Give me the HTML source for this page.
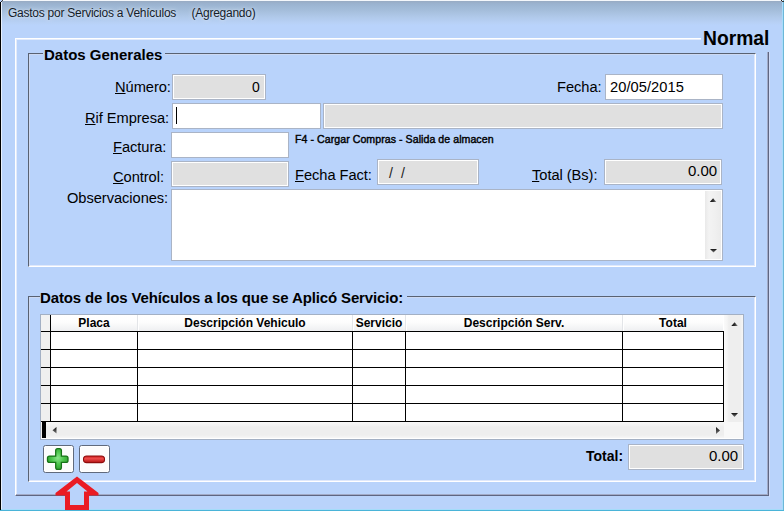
<!DOCTYPE html>
<html><head><meta charset="utf-8">
<style>
*{margin:0;padding:0;box-sizing:border-box}
html,body{width:784px;height:511px;overflow:hidden;background:#b9d3fb;font-family:"Liberation Sans",sans-serif;color:#000}
.a{position:absolute}
#win{position:absolute;left:0;top:0;width:784px;height:511px;background:#b9d3fb;overflow:hidden}
#titlebar{left:2px;top:1px;width:780px;height:24px;background:linear-gradient(#98abc3 0px,#9bb3d0 3px,#a4bdda 9px,#b0c9ea 16px,#b8d1f6 22px,#b9d3fb 24px)}
#title{left:8px;top:6px;font-size:12px;color:#141c2a;white-space:pre;letter-spacing:-0.25px;text-shadow:0 0 5px rgba(235,243,255,.8),0 0 2px rgba(235,243,255,.6)}
.lbl{position:absolute;font-size:14.67px;white-space:pre;color:#000;line-height:16px;letter-spacing:-0.05px}
.u{text-decoration:underline;text-underline-offset:1px;text-decoration-thickness:1px}
.fld{position:absolute;border:1px solid #aab4c6;background:#fff;box-shadow:inset 0 0 0 1px #fff}
.g{background:#e0e0e0}
.val{position:absolute;font-size:14px;line-height:16px;white-space:pre}
.hdr{position:absolute;font-size:12px;font-weight:bold;line-height:14px;white-space:pre;text-align:center}
</style></head><body>
<div id="win">
  <div class="a" style="left:0;top:0;width:1px;height:511px;background:#000"></div>
  <div class="a" style="left:1px;top:0;width:1px;height:511px;background:#e8f0fc"></div>
  <div class="a" style="left:783px;top:0;width:1px;height:511px;background:#6cb6d8"></div>
  <div class="a" style="left:782px;top:0;width:1px;height:511px;background:#a8dcfa"></div>
  <div class="a" style="left:1px;top:509px;width:782px;height:1px;background:#a4dcfa"></div>
  <div class="a" style="left:0;top:510px;width:784px;height:1px;background:#4ab4d8"></div>
  <div class="a" id="titlebar"></div>
  <div class="a" style="left:1px;top:0;width:782px;height:1px;background:#f4f7fb"></div>
  <div class="a" style="left:0;top:0;width:2px;height:2px;background:#b9d3fb"></div>
  <div class="a" style="left:1px;top:1px;width:1px;height:1px;background:#333"></div>
  <div class="a" style="left:2px;top:0;width:1px;height:1px;background:#444"></div>
  <div class="a" style="left:781px;top:0;width:1px;height:1px;background:#222"></div>
  <div class="a" style="left:782px;top:1px;width:2px;height:1px;background:#333"></div>
  <div class="a" id="title">Gastos por Servicios a Vehículos     (Agregando)</div>

  <!-- inner raised panel -->
  <div class="a" style="left:15px;top:38px;width:754px;height:458px;border-top:1px solid #fff;border-left:1px solid #fff;border-right:1px solid #5e6682;border-bottom:1px solid #5e6682;box-shadow:inset 1px 1px 0 #e2ebfc"></div>
  <div class="a" style="left:16px;top:494px;width:752px;height:1px;background:#a2aac6"></div>
  <div class="a" style="left:767px;top:39px;width:1px;height:456px;background:#a2aac6"></div>
  <div class="a" style="left:769px;top:39px;width:1px;height:458px;background:#cfdbf8"></div>
  <!-- Normal label -->
  <div class="a" style="left:701px;top:26px;width:76px;height:26px;background:#b9d3fb"></div>
  <div class="a" style="left:703px;top:27.5px;font-size:19.3px;font-weight:bold;line-height:22px;color:#000;letter-spacing:0px">Normal</div>

  <!-- groupbox 1 -->
  <div class="a" style="left:28px;top:53px;width:728px;height:214px;border-top:1px solid #596272;border-left:1px solid #596272;border-right:1px solid #fff;border-bottom:1px solid #fff;box-shadow:inset 1px 1px 0 #cdd9f2,inset -1px -1px 0 #dfe8fb"></div>
  <div class="a" style="left:43px;top:47px;padding:0 3px 0 1px;background:#b9d3fb;font-size:15px;font-weight:bold;line-height:16px">Datos Generales</div>

  <div class="lbl" style="left:115px;top:79px"><span class="u">N</span>úmero:</div>
  <div class="fld g" style="left:172px;top:74px;width:94px;height:26px"></div>
  <div class="val" style="left:252px;top:79px">0</div>

  <div class="lbl" style="left:557px;top:79px">Fecha:</div>
  <div class="fld" style="left:605px;top:74px;width:118px;height:26px"></div>
  <div class="val" style="left:610px;top:79px;font-size:14.67px;letter-spacing:0.05px">20/05/2015</div>

  <div class="lbl" style="left:85px;top:110px"><span class="u">R</span>if Empresa:</div>
  <div class="fld" style="left:172px;top:103px;width:149px;height:26px"></div>
  <div class="a" style="left:176px;top:107px;width:1px;height:17px;background:#000"></div>
  <div class="fld g" style="left:323px;top:103px;width:400px;height:26px"></div>

  <div class="lbl" style="left:113px;top:139px"><span class="u">F</span>actura:</div>
  <div class="fld" style="left:171px;top:132px;width:118px;height:26px"></div>
  <div class="a" style="left:295px;top:133px;font-size:10.6px;line-height:13px;white-space:pre;letter-spacing:0.05px;-webkit-text-stroke:0.4px #000">F4 - Cargar Compras - Salida de almacen</div>

  <div class="lbl" style="left:113px;top:169px"><span class="u">C</span>ontrol:</div>
  <div class="fld g" style="left:171px;top:161px;width:118px;height:26px"></div>

  <div class="lbl" style="left:295px;top:167px"><span class="u">F</span>echa Fact:</div>
  <div class="fld g" style="left:377px;top:159px;width:102px;height:26px"></div>
  <div class="val" style="left:389px;top:165px;color:#222">/</div>
  <div class="val" style="left:401px;top:165px;color:#222">/</div>

  <div class="lbl" style="left:532px;top:167px"><span class="u">T</span>otal (Bs):</div>
  <div class="fld g" style="left:604px;top:159px;width:118px;height:26px"></div>
  <div class="val" style="left:688px;top:162px;font-size:15px;line-height:17px">0.00</div>

  <div class="lbl" style="left:67px;top:190px">Observaciones:</div>
  <div class="fld" style="left:171px;top:189px;width:552px;height:72px"></div>
  <div class="a" style="left:705px;top:191px;width:16px;height:68px;background:linear-gradient(90deg,#e9e9e9,#f3f3f3 25%,#f0f0f0 60%,#ebebeb)"></div>
  

  <!-- groupbox 2 -->
  <div class="a" style="left:28px;top:296px;width:728px;height:186px;border-top:1px solid #596272;border-left:1px solid #596272;border-right:1px solid #fff;border-bottom:1px solid #fff;box-shadow:inset 1px 1px 0 #cdd9f2,inset -1px -1px 0 #dfe8fb"></div>
  <div class="a" style="left:40px;top:290px;padding:0 4px 0 0;background:#b9d3fb;font-size:15px;font-weight:bold;line-height:16px;letter-spacing:-0.14px">Datos de los Vehículos a los que se Aplicó Servicio:</div>

  <!-- grid -->
  <div class="a" style="left:40px;top:314px;width:704px;height:126px;background:#fff;border:1px solid #a3b0c4"></div>
  <div class="a" style="left:41px;top:315px;width:682px;height:16px;background:linear-gradient(#ffffff,#fdfdfd 45%,#eeeff1)"></div>
  <div class="a" style="left:41px;top:315px;width:9px;height:16px;background:#f2f2f2"></div>
  <div class="a" style="left:51px;top:332px;width:672px;height:89px;background:#fff"></div>
  <div class="a" style="left:41px;top:332px;width:9px;height:89px;background:#efefef"></div>
  <div class="a" style="left:137px;top:315px;width:1px;height:16px;background:#e3e5e8"></div>
  <div class="a" style="left:138px;top:315px;width:1px;height:16px;background:#ffffff"></div>
  <div class="a" style="left:352px;top:315px;width:1px;height:16px;background:#e3e5e8"></div>
  <div class="a" style="left:353px;top:315px;width:1px;height:16px;background:#ffffff"></div>
  <div class="a" style="left:405px;top:315px;width:1px;height:16px;background:#e3e5e8"></div>
  <div class="a" style="left:406px;top:315px;width:1px;height:16px;background:#ffffff"></div>
  <div class="a" style="left:622px;top:315px;width:1px;height:16px;background:#e3e5e8"></div>
  <div class="a" style="left:623px;top:315px;width:1px;height:16px;background:#ffffff"></div>
  <div class="a" style="left:41px;top:331px;width:684px;height:1px;background:#000"></div>
  <div class="a" style="left:41px;top:349px;width:684px;height:1px;background:#000"></div>
  <div class="a" style="left:41px;top:367px;width:684px;height:1px;background:#000"></div>
  <div class="a" style="left:41px;top:385px;width:684px;height:1px;background:#000"></div>
  <div class="a" style="left:41px;top:403px;width:684px;height:1px;background:#000"></div>
  <div class="a" style="left:41px;top:421px;width:684px;height:1px;background:#000"></div>
  <div class="a" style="left:50px;top:315px;width:1px;height:107px;background:#000"></div>
  <div class="a" style="left:137px;top:331px;width:1px;height:91px;background:#000"></div>
  <div class="a" style="left:352px;top:331px;width:1px;height:91px;background:#000"></div>
  <div class="a" style="left:405px;top:331px;width:1px;height:91px;background:#000"></div>
  <div class="a" style="left:622px;top:331px;width:1px;height:91px;background:#000"></div>
  <div class="a" style="left:723px;top:331px;width:1px;height:91px;background:#000"></div>
  <div class="hdr" style="left:51px;top:316px;width:86px">Placa</div>
  <div class="hdr" style="left:138px;top:316px;width:214px">Descripción Vehiculo</div>
  <div class="hdr" style="left:353px;top:316px;width:52px">Servicio</div>
  <div class="hdr" style="left:406px;top:316px;width:216px">Descripción Serv.</div>
  <div class="hdr" style="left:623px;top:316px;width:100px">Total</div>
  <div class="a" style="left:724px;top:315px;width:19px;height:107px;background:linear-gradient(90deg,#fafafa 0,#f5f5f5 3px,#eeeeee 5px,#eeeeee 16px,#f6f6f6 19px)"></div>
  
  
  <div class="a" style="left:41px;top:422px;width:683px;height:16px;background:linear-gradient(#f8f8f8 0,#f3f3f3 3px,#eeeeee 5px,#eeeeee 13px,#f6f6f6 16px)"></div>
  <div class="a" style="left:42px;top:422px;width:4px;height:16px;background:#000"></div>
  
  
  <div class="a" style="left:724px;top:422px;width:19px;height:16px;background:#f8f8f8"></div>

  <svg class="a" style="left:0;top:0" width="784" height="511" viewBox="0 0 784 511">
    <defs><linearGradient id="ar" x1="0" y1="0" x2="1" y2="0"><stop offset="0" stop-color="#0a0a0a"/><stop offset="0.55" stop-color="#333"/><stop offset="1" stop-color="#8a8a8a"/></linearGradient>
    <linearGradient id="ad" x1="0" y1="0" x2="0" y2="1"><stop offset="0" stop-color="#111"/><stop offset="1" stop-color="#777"/></linearGradient></defs>
    <path d="M731.3,326 L734.6,322.3 L737.8,326 Z" fill="url(#ar)"/>
    <path d="M731,413 L738,413 L734.5,417 Z" fill="url(#ad)"/>
    <path d="M56.5,427 L52.5,430.2 L56.5,433.5 Z" fill="url(#ad)"/>
    <path d="M716,427 L720,430.5 L716,434 Z" fill="url(#ad)"/>
    <path d="M709.8,202 L713.1,198.3 L716.3,202 Z" fill="url(#ar)"/>
    <path d="M710,249 L717,249 L713.5,252.5 Z" fill="url(#ad)"/>
  </svg>
  <!-- buttons -->
  <div class="a" style="left:43px;top:445px;width:31px;height:28px;border:1px solid #606a7c;border-radius:2.5px;background:#fcfcfc;box-shadow:inset 0 0 0 1px #fff"></div>
  <div class="a" style="left:79px;top:445px;width:31px;height:28px;border:1px solid #606a7c;border-radius:2.5px;background:#fcfcfc;box-shadow:inset 0 0 0 1px #fff"></div>
  <svg class="a" style="left:0;top:0" width="784" height="511" viewBox="0 0 784 511">
    <defs>
      <linearGradient id="gv" x1="0" y1="0" x2="1" y2="0"><stop offset="0" stop-color="#1f8a1f"/><stop offset="0.5" stop-color="#6ad86a"/><stop offset="1" stop-color="#1f8a1f"/></linearGradient>
      <linearGradient id="gh" x1="0" y1="0" x2="0" y2="1"><stop offset="0" stop-color="#1f8a1f"/><stop offset="0.5" stop-color="#5fd25f"/><stop offset="1" stop-color="#1a7a1a"/></linearGradient>
      <radialGradient id="gr" cx="0.5" cy="0.45" r="0.6"><stop offset="0" stop-color="#8be58b"/><stop offset="0.5" stop-color="#4cc54c"/><stop offset="1" stop-color="#2a9a2a"/></radialGradient>
      <linearGradient id="rr" x1="0" y1="0" x2="0" y2="1"><stop offset="0" stop-color="#c81e1e"/><stop offset="0.4" stop-color="#ee4a4a"/><stop offset="1" stop-color="#b01212"/></linearGradient>
      <linearGradient id="rh" x1="0" y1="0" x2="0" y2="1"><stop offset="0" stop-color="#8a0c0c"/><stop offset="0.45" stop-color="#e84040"/><stop offset="1" stop-color="#9a1010"/></linearGradient>
    </defs>
    <path d="M55.7,450.5 Q55.7,448.6 57.6,448.6 L59.5,448.6 Q61.4,448.6 61.4,450.5 L61.4,456.1 L66,456.1 Q68,456.1 68,458.1 L68,460.4 Q68,462.4 66,462.4 L61.4,462.4 L61.4,467.4 Q61.4,469.3 59.5,469.3 L57.6,469.3 Q55.7,469.3 55.7,467.4 L55.7,462.4 L49.5,462.4 Q47.5,462.4 47.5,460.4 L47.5,458.1 Q47.5,456.1 49.5,456.1 L55.7,456.1 Z" fill="url(#gr)" stroke="#177317" stroke-width="1.3"/>
    <rect x="83.5" y="456" width="21" height="6.6" rx="3.2" fill="url(#rr)" stroke="#8e0c0c" stroke-width="1.1"/>
    <path fill="#b9d3fb" d="M77,483 L87.5,491.5 L84,491.5 L84,505 L70,505 L70,491.5 L66.5,491.5 Z"/>
    <path fill="#ea1c24" fill-rule="evenodd" d="M77,476.5 L98.5,493 L98.5,495.5 L89,495.5 L89,510 L65,510 L65,495.5 L55.5,495.5 L55.5,493 Z M77,483 L87.5,491.5 L84,491.5 L84,505 L70,505 L70,491.5 L66.5,491.5 Z"/>
  </svg>

  <div class="a" style="left:586px;top:448px;font-size:14px;font-weight:bold;line-height:16px">Total:</div>
  <div class="fld g" style="left:628px;top:444px;width:116px;height:26px"></div>
  <div class="val" style="left:709px;top:447px;font-size:15px;line-height:17px">0.00</div>
</div>
</body></html>
